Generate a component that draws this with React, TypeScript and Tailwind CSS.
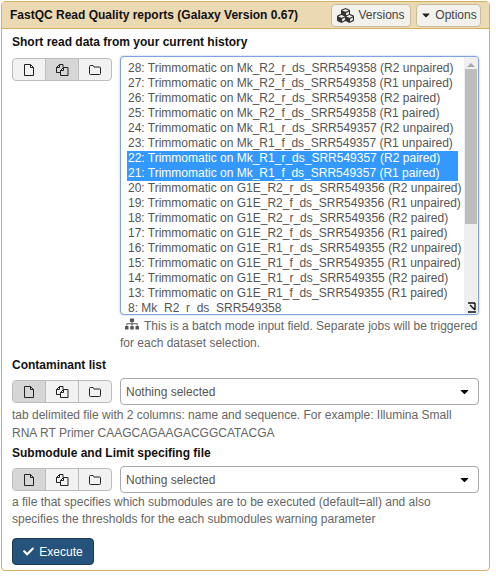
import { FaCaretDown, FaCheck, FaCubes, FaSitemap } from "react-icons/fa";

const datasets = [
  "28: Trimmomatic on Mk_R2_r_ds_SRR549358 (R2 unpaired)",
  "27: Trimmomatic on Mk_R2_f_ds_SRR549358 (R1 unpaired)",
  "26: Trimmomatic on Mk_R2_r_ds_SRR549358 (R2 paired)",
  "25: Trimmomatic on Mk_R2_f_ds_SRR549358 (R1 paired)",
  "24: Trimmomatic on Mk_R1_r_ds_SRR549357 (R2 unpaired)",
  "23: Trimmomatic on Mk_R1_f_ds_SRR549357 (R1 unpaired)",
  "22: Trimmomatic on Mk_R1_r_ds_SRR549357 (R2 paired)",
  "21: Trimmomatic on Mk_R1_f_ds_SRR549357 (R1 paired)",
  "20: Trimmomatic on G1E_R2_r_ds_SRR549356 (R2 unpaired)",
  "19: Trimmomatic on G1E_R2_f_ds_SRR549356 (R1 unpaired)",
  "18: Trimmomatic on G1E_R2_r_ds_SRR549356 (R2 paired)",
  "17: Trimmomatic on G1E_R2_f_ds_SRR549356 (R1 paired)",
  "16: Trimmomatic on G1E_R1_r_ds_SRR549355 (R2 unpaired)",
  "15: Trimmomatic on G1E_R1_f_ds_SRR549355 (R1 unpaired)",
  "14: Trimmomatic on G1E_R1_r_ds_SRR549355 (R2 paired)",
  "13: Trimmomatic on G1E_R1_f_ds_SRR549355 (R1 paired)",
  "8: Mk_R2_r_ds_SRR549358",
];

function FileIcon() {
  return (
    <svg width="12" height="14" viewBox="0 0 12 14" fill="none" stroke="#222" strokeWidth="1">
      <path d="M1.500 1.500h6l3 3v8h-9z" />
      <path d="M7.500 1.500v3h3" />
    </svg>
  );
}

function FilesIcon() {
  return (
    <svg width="14" height="14" viewBox="0 0 14 14" fill="none" stroke="#222" strokeWidth="1">
      <path d="M1.500 9.500v-5l3-3h3.500v3" />
      <path d="M4.500 1.500v3h-3v5h4" />
      <path d="M5.500 12.500v-5l3-3h4.500v8z" />
      <path d="M8.500 4.500v3h-3" />
    </svg>
  );
}

function FolderIcon() {
  return (
    <svg width="14" height="12" viewBox="0 0 14 12" fill="none" stroke="#222" strokeWidth="1">
      <path d="M1.500 2.500q0-1 1-1h2.500l1 1.500h5.500q1 0 1 1v5.500q0 1-1 1h-9q-1 0-1-1z" />
    </svg>
  );
}

function ModeButtons({ active }: { active: number }) {
  const icons = [<FileIcon key="file" />, <FilesIcon key="files" />, <FolderIcon key="folder" />];
  return (
    <div className="flex h-[23px] w-[100px] shrink-0 overflow-hidden rounded border border-[#bdbdbd] bg-[#f2f2f2]">
      {icons.map((icon, idx) => (
        <div
          key={idx}
          className={`flex flex-1 items-center justify-center border-[#bdbdbd] ${idx > 0 ? "border-l" : ""} ${
            idx === active ? "bg-[#d6d6d6]" : ""
          }`}
        >
          {icon}
        </div>
      ))}
    </div>
  );
}

function SelectBox() {
  return (
    <div className="flex h-[27px] flex-1 items-center justify-between rounded border border-[#a8a8a8] bg-white pl-[5px] pr-[7px] text-[#555]">
      <span>Nothing selected</span>
      <FaCaretDown className="text-[13px] text-black" />
    </div>
  );
}

export default function App() {
  return (
    <div className="h-[576px] w-[496px] bg-white pl-[1px] pt-[1px] font-['Liberation_Sans',sans-serif] text-xs text-[#333]">
      <div className="h-[570px] w-[489px] rounded border border-[#d6b161]">
        {/* Header */}
        <div className="flex h-[27px] items-center justify-between border-b border-[#d6b161] bg-[#ebd9b2] pl-[8px] pr-[8px]">
          <span className="font-bold text-[#111]">FastQC Read Quality reports (Galaxy Version 0.67)</span>
          <div className="flex gap-[5px]">
            <div className="flex h-[23px] w-[80px] items-center justify-center gap-[4px] rounded border border-[#c9bd9d] bg-[#f3f1ec] text-[#444]">
              <FaCubes className="text-[17px] text-[#333]" />
              <span>Versions</span>
            </div>
            <div className="flex h-[23px] w-[65px] items-center justify-center gap-[3px] rounded border border-[#c9bd9d] bg-[#f3f1ec] text-[#444]">
              <FaCaretDown className="text-[12px] text-[#222]" />
              <span>Options</span>
            </div>
          </div>
        </div>

        <div className="px-[10px] pt-[6px]">
          {/* Short read data */}
          <div className="font-bold leading-[15px] text-[#111]">Short read data from your current history</div>
          <div className="mt-[6px] flex gap-[8px]">
            <div className="pt-[2px]">
              <ModeButtons active={1} />
            </div>
            <div className="flex h-[259px] flex-1 overflow-hidden rounded-sm border border-[#7ea3e0] bg-white shadow-[0_0_2px_#9db9e8]">
              <div className="flex-1 overflow-hidden pl-[6px] pr-[6px] pt-[4px] text-[#555]">
                {datasets.map((item) => {
                  const selected = item.startsWith("22:") || item.startsWith("21:");
                  return (
                    <div
                      key={item}
                      className={`h-[15px] whitespace-nowrap pl-[1px] leading-[15px] ${
                        selected ? "bg-[#3399ff] text-white" : ""
                      }`}
                    >
                      {item}
                    </div>
                  );
                })}
              </div>
              {/* Scrollbar */}
              <div className="relative w-[14px] shrink-0 bg-[#efefef]">
                <div className="mx-auto mt-[6px] h-0 w-0 border-x-[4px] border-b-[4px] border-x-transparent border-b-[#a8a8a8]" />
                <div className="mx-auto mt-[2px] h-[155px] w-[12px] bg-[#bdbdbd]" />
                <svg className="absolute bottom-[1px] right-[1px]" width="11" height="11" viewBox="0 0 11 11">
                  <path d="M2 1h7M9 1v7M4 3l5 5M2 10h8" stroke="#111" strokeWidth="1.400" fill="none" />
                </svg>
              </div>
            </div>
          </div>
          <div className="mt-[2px] pl-[108px] leading-[17px] text-[#666]">
            <FaSitemap className="mr-[5px] ml-[5px] inline align-[-1px] text-[14px] text-[#555]" />
            This is a batch mode input field. Separate jobs will be triggered for each dataset selection.
          </div>

          {/* Contaminant list */}
          <div className="mt-[6px] font-bold leading-[15px] text-[#111]">Contaminant list</div>
          <div className="mt-[5px] flex items-center gap-[8px]">
            <ModeButtons active={0} />
            <SelectBox />
          </div>
          <div className="mt-[1px] leading-[18px] text-[#666]">
            tab delimited file with 2 columns: name and sequence. For example: Illumina Small RNA RT Primer
            CAAGCAGAAGACGGCATACGA
          </div>

          {/* Submodule file */}
          <div className="mt-[4px] font-bold leading-[15px] text-[#111]">Submodule and Limit specifing file</div>
          <div className="mt-[5px] flex items-center gap-[8px]">
            <ModeButtons active={0} />
            <SelectBox />
          </div>
          <div className="mt-[1px] leading-[17px] text-[#666]">
            a file that specifies which submodules are to be executed (default=all) and also specifies the thresholds
            for the each submodules warning parameter
          </div>

          <div className="mt-[10px] flex h-[27px] w-[82px] items-center justify-center gap-[5px] rounded border border-[#1a3a56] bg-[#25537b] text-white">
            <FaCheck className="text-[11px]" />
            <span>Execute</span>
          </div>
        </div>
      </div>
    </div>
  );
}
